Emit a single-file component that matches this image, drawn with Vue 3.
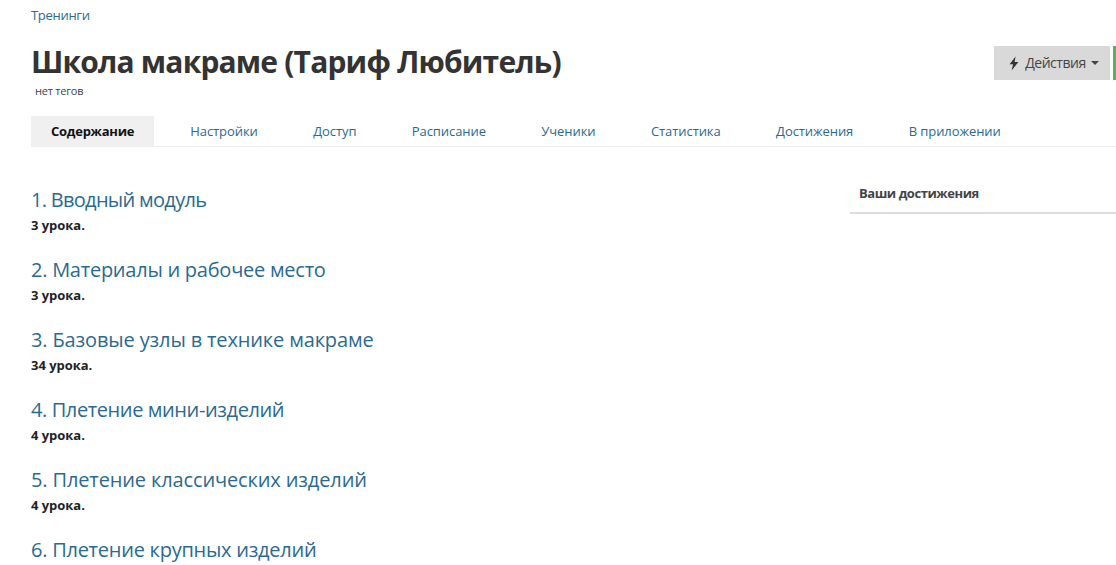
<script setup>
const tabs = ['Содержание','Настройки','Доступ','Расписание','Ученики','Статистика','Достижения','В приложении']
const modules = [
  { t:'1. Вводный модуль', c:'3 урока.', ls:-0.7 },
  { t:'2. Материалы и рабочее место', c:'3 урока.', ls:-0.25 },
  { t:'3. Базовые узлы в технике макраме', c:'34 урока.', ls:-0.14 },
  { t:'4. Плетение мини-изделий', c:'4 урока.', ls:-0.4 },
  { t:'5. Плетение классических изделий', c:'4 урока.', ls:-0.13 },
  { t:'6. Плетение крупных изделий', c:'', ls:-0.25 },
]
</script>

<template>
  <div class="page">
    <a class="crumb">Тренинги</a>
    <div class="head">
      <div class="titles">
        <h1>Школа макраме (Тариф Любитель)</h1>
        <div class="tags">нет тегов</div>
      </div>
      <div class="actions">
        <button class="btn">
          <svg width="12" height="15" viewBox="0 0 12 15"><path d="M7.6 0.5 1.6 8.2h3.5L3.6 14.5 10.4 5.9H6.6Z" fill="#333"/></svg>
          <span>Действия</span>
          <i class="caret"></i>
        </button>
        <div class="green"></div>
      </div>
    </div>
    <nav class="tabs">
      <a v-for="(t,i) in tabs" :key="t" class="tab" :class="{active:i===0}">{{ t }}</a>
    </nav>
    <div class="body">
      <main class="list">
        <section v-for="m in modules" :key="m.t" class="mod">
          <a class="mt" :style="{ letterSpacing: m.ls + 'px' }">{{ m.t }}</a>
          <div v-if="m.c" class="mc">{{ m.c }}</div>
        </section>
      </main>
      <aside class="side"><div class="sh">Ваши достижения</div></aside>
    </div>
  </div>
</template>

<style>
html, body { margin: 0; overflow: hidden; background: #fff; }
</style>
<style scoped>
.page { width: 1116px; height: 565px; overflow: hidden; box-sizing: border-box; padding: 7px 0 0 31px; font-family: "Open Sans", "Liberation Sans", sans-serif; color: #333; }
.crumb { display: block; font-size: 13px; line-height: 16px; color: #2a6a92; letter-spacing: -0.3px; }
.head { display: flex; justify-content: space-between; margin-top: 23px; }
h1 { margin: 0; font-size: 30px; line-height: 32px; font-weight: 700; color: #333; letter-spacing: -0.82px; }
.tags { margin: 6px 0 0 4px; font-size: 11px; line-height: 14px; color: #444; letter-spacing: -0.2px; }
.actions { display: flex; gap: 3px; height: 34px; }
.btn { width: 116px; height: 34px; border: 0; background: #d9d9d9; display: flex; align-items: center; justify-content: center; gap: 5px; font: 14px/20px "Open Sans", "Liberation Sans", sans-serif; color: #444; letter-spacing: -0.45px; padding: 0 0 0 3px; }
.caret { width: 0; height: 0; border: 4px solid transparent; border-top-color: #444; border-bottom: 0; }
.green { width: 3px; background: #5cb05c; }
.tabs { display: flex; margin-top: 18px; border-bottom: 1px solid #eee; height: 30px; }
.tab { padding: 0 20px; margin-right: 15.4px; font-size: 13px; line-height: 30px; color: #2a6a92; letter-spacing: -0.07px; }
.tab.active { background: #f0f0f0; color: #111; font-weight: 700; margin-right: 16px; letter-spacing: -0.25px; }
.body { display: flex; }
.list { width: 819px; padding-top: 40px; }
.mod { height: 70px; }
.mt { display: block; font-size: 20px; line-height: 26px; color: #2a6a92; }
.mc { margin-top: 3px; font-size: 13px; line-height: 18px; font-weight: 700; color: #222; letter-spacing: -0.03px; }
.side { width: 266px; padding-top: 32px; }
.sh { box-sizing: border-box; height: 35px; padding-left: 9px; font-size: 13px; line-height: 28px; font-weight: 700; color: #444; border-bottom: 2px solid #ddd; letter-spacing: -0.45px; }
</style>
